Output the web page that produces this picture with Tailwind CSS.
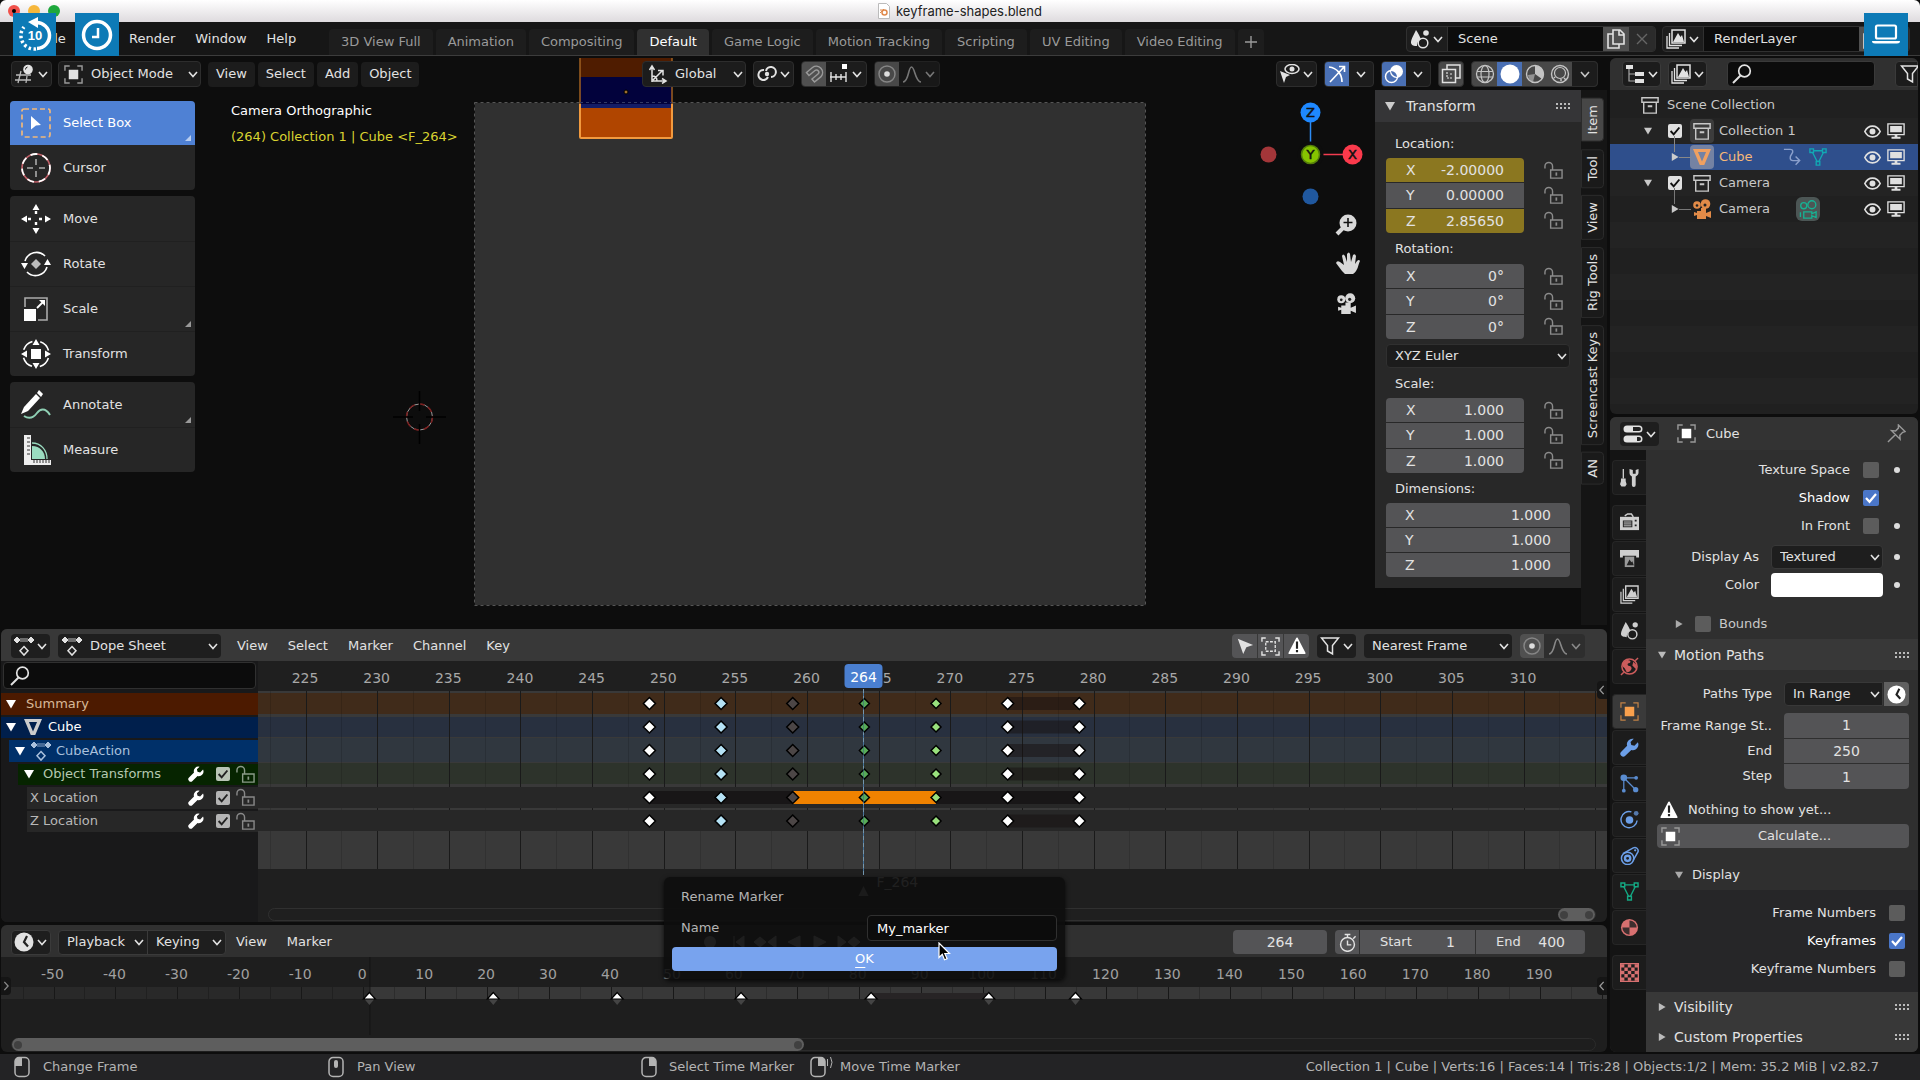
<!DOCTYPE html>
<html lang="en">
<head>
    <meta charset="UTF-8">
    <meta name="viewport" content="width=device-width, initial-scale=1.0">
    <title>keyframe-shapes.blend</title>
    <script src="https://cdn.jsdelivr.net/npm/@tailwindcss/browser@4"></script>
</head>
<body class="bg-black">
    <!-- Icon sprite -->
    <svg class="hidden">
        <symbol id="chev" viewBox="0 0 12 12"><path d="M2 4l4 4.500 4-4.500" fill="none" stroke="currentColor" stroke-width="1.600"/></symbol>
        <symbol id="chev-left" viewBox="0 0 12 12"><path d="M8 1L3.500 6 8 11" fill="none" stroke="currentColor" stroke-width="1.600"/></symbol>
        <symbol id="chev-right" viewBox="0 0 12 12"><path d="M4 1l4.500 5L4 11" fill="none" stroke="currentColor" stroke-width="1.600"/></symbol>
        <symbol id="tri-down" viewBox="0 0 10 10"><path d="M0 1h10L5 9.500z" fill="currentColor"/></symbol>
        <symbol id="tri-right" viewBox="0 0 10 10"><path d="M1 0v10l8.500-5z" fill="currentColor"/></symbol>
        <symbol id="grip" viewBox="0 0 16 8"><path d="M1 2h14M1 6h14" stroke="currentColor" stroke-width="2" stroke-dasharray="2 2"/></symbol>
        <symbol id="check" viewBox="0 0 16 16"><path d="M3 8l3.500 3.800L13 4" fill="none" stroke="currentColor" stroke-width="2.200"/></symbol>
        <symbol id="view3d" viewBox="0 0 20 20"><path d="M6 7L3 19M12 12l-1 7M1 11h15M0 16h16" fill="none" stroke="currentColor" stroke-width="1.300" opacity=".8"/><circle cx="13" cy="5.500" r="4.800" fill="currentColor"/><path d="M10.500 5.500a2.500 2.500 0 0 1 2-2.500" fill="none" stroke="#222"/></symbol>
        <symbol id="objmode" viewBox="0 0 20 20"><path d="M1 6V1h5M14 1h5v5M19 14v5h-5M6 19H1v-5" fill="none" stroke="#999" stroke-width="1.500"/><path d="M5 5h10v10H5z" fill="currentColor"/></symbol>
        <symbol id="axes" viewBox="0 0 20 20"><path d="M4 18V3M4 17h14M5 16L14 7M1.500 6L4 2l2.500 4M14 14.500l4 2.500-4 2.500M10 6.500h5v5M4 12c3 0 5 2 5 5" fill="none" stroke="currentColor" stroke-width="1.500"/></symbol>
        <symbol id="pivot" viewBox="0 0 20 20"><path d="M9 7a5 5 0 1 1 5 6M11 13a5 5 0 1 1-4-7" fill="none" stroke="currentColor" stroke-width="2"/><circle cx="10" cy="10" r="2.200" fill="currentColor"/></symbol>
        <symbol id="magnet" viewBox="0 0 20 20"><path d="M2.500 8.500L8.500 3.500a6.300 6.300 0 0 1 8.500 9.200L10.500 18l-2.500-3 6-5a2.300 2.300 0 0 0-3-3.500L5 11.500z" fill="none" stroke="currentColor" stroke-width="1.500"/><path d="M8 15l2.500 3" stroke="currentColor"/></symbol>
        <symbol id="snapinc" viewBox="0 0 20 20"><path d="M1 13h16M2 8v10M7 10v6M12 10v6M17 8v10" stroke="currentColor" stroke-width="1.400"/><path d="M13 0h5v5h-5z" fill="#fff"/></symbol>
        <symbol id="prop" viewBox="0 0 20 20"><circle cx="10" cy="10" r="8" fill="none" stroke="#858585" stroke-width="1.500"/><circle cx="10" cy="10" r="2.800" fill="#ddd"/></symbol>
        <symbol id="curve" viewBox="0 0 20 20"><path d="M1 18c6 0 5-15 8.500-15S13 18 19 18" fill="none" stroke="currentColor" stroke-width="1.600"/></symbol>
        <symbol id="viseye" viewBox="0 0 20 20"><path d="M0 7l10 4-4 2-2 6z" fill="currentColor"/><ellipse cx="12" cy="5" rx="7" ry="4.500" fill="none" stroke="currentColor" stroke-width="1.500"/><circle cx="12" cy="5" r="2.500" fill="currentColor"/></symbol>
        <symbol id="gizmo" viewBox="0 0 20 20"><path d="M2 3c8 1 13 7 13 15M3 18L17 3M12 2.500h5.500V8" fill="none" stroke="currentColor" stroke-width="1.600"/></symbol>
        <symbol id="overlay" viewBox="0 0 20 20"><circle cx="12.500" cy="7.500" r="6.500" fill="currentColor"/><circle cx="7.500" cy="12.500" r="6" fill="none" stroke="currentColor" stroke-width="1.500"/><path d="M7 7a6 6 0 0 1 6 6 6.500 6.500 0 0 1-6-6z" fill="#4a70b4"/></symbol>
        <symbol id="xray" viewBox="0 0 20 20"><path d="M6 5V1h13v13h-4" fill="none" stroke="currentColor" stroke-width="1.500"/><path d="M1.500 5.500h13v13h-13z" fill="none" stroke="currentColor" stroke-width="1.500"/><path d="M6 8v6h6M9 10h3" fill="none" stroke="currentColor" stroke-width="1.200" stroke-dasharray="2 1"/></symbol>
        <symbol id="wire" viewBox="0 0 20 20"><circle cx="10" cy="10" r="8.500" fill="none" stroke="currentColor" stroke-width="1.300"/><ellipse cx="10" cy="10" rx="4" ry="8.500" fill="none" stroke="currentColor" stroke-width="1.200"/><path d="M2 7.500h16M2 13h16" stroke="currentColor" stroke-width="1.200"/></symbol>
        <symbol id="matsh" viewBox="0 0 20 20"><circle cx="10" cy="10" r="8.500" fill="none" stroke="currentColor" stroke-width="1.400"/><path d="M10 2v8l7 5a8 8 0 0 0-7-13z" fill="currentColor"/><path d="M3 11l7-1-2 8a8 8 0 0 1-5-7z" fill="currentColor" opacity=".6"/></symbol>
        <symbol id="rendsh" viewBox="0 0 20 20"><circle cx="10" cy="10" r="8.500" fill="none" stroke="currentColor" stroke-width="1.400"/><circle cx="10" cy="9" r="5.500" fill="none" stroke="currentColor" stroke-width="1.200"/><path d="M14 14l2 2M11 15v2M5 13l-1 1" stroke="currentColor" stroke-width="1.500"/></symbol>
        <symbol id="scene" viewBox="0 0 20 20"><path d="M6 1C3 7 1 11 1 13.500c0 3 3.500 3.500 6 3.500 0-4 2-6 4-6.500C10 7.500 8 4 6 1z" fill="currentColor"/><circle cx="13" cy="14" r="4.800" fill="none" stroke="currentColor" stroke-width="1.500"/><circle cx="16" cy="4" r="2.800" fill="currentColor"/></symbol>
        <symbol id="layers" viewBox="0 0 20 20"><path d="M6 1h13v13H6z" fill="none" stroke="currentColor" stroke-width="1.500"/><path d="M7 13l5-9 2.500 4L16 6l2 7z" fill="currentColor"/><path d="M3.500 4v12.500H16M1 7v12h12" fill="none" stroke="currentColor" stroke-width="1.300"/></symbol>
        <symbol id="copy" viewBox="0 0 20 20"><path d="M7 1h7l4 4v10H7zM13 1v5h5" fill="none" stroke="currentColor" stroke-width="1.600"/><path d="M7 5H2v14h11v-4" fill="none" stroke="currentColor" stroke-width="1.600"/></symbol>
        <symbol id="cross" viewBox="0 0 20 20"><path d="M5 5l10 10M15 5L5 15" stroke="currentColor" stroke-width="1.400"/></symbol>
        <symbol id="outliner" viewBox="0 0 20 20"><path d="M1 1h7v4H1zM10 8h9v4h-9zM10 15h9v4h-9z" fill="currentColor"/><path d="M4 5v12h6M4 10h6" fill="none" stroke="currentColor" stroke-width="1.200" opacity=".7"/></symbol>
        <symbol id="search" viewBox="0 0 20 20"><circle cx="12.500" cy="7" r="5.800" fill="none" stroke="currentColor" stroke-width="1.700"/><path d="M8.500 11.500L1 19" stroke="currentColor" stroke-width="2"/></symbol>
        <symbol id="funnel" viewBox="0 0 20 20"><path d="M1.500 2h17l-6 7.500V18l-5-3V9.500z" fill="none" stroke="currentColor" stroke-width="1.500"/></symbol>
        <symbol id="coll" viewBox="0 0 20 20"><path d="M1 2h18v5H1zM3 7v12h14V7" fill="none" stroke="currentColor" stroke-width="1.600"/><path d="M7.500 11.500h5" stroke="currentColor" stroke-width="2.200"/></symbol>
        <symbol id="meshobj" viewBox="0 0 20 20"><path d="M0 1h20l-7.500 18h-5zM5.500 4.500L10 15l4.500-10.500z" fill="currentColor" fill-rule="evenodd"/></symbol>
        <symbol id="mesh" viewBox="0 0 20 20"><path d="M5 3h10M4 5l5 10M16 5l-5 10" stroke="currentColor" stroke-width="1.500"/><path d="M1 1h4v4H1zM15 1h4v4h-4zM8 15h4v4H8z" fill="none" stroke="currentColor" stroke-width="1.500"/></symbol>
        <symbol id="animlink" viewBox="0 0 20 20"><path d="M1 1.500h7c3.500 0 3.500 3 1.500 5.500s-2.500 7 1.500 7h7.500M14 9.500l4.500 4.500-4.500 4.500" fill="none" stroke="currentColor" stroke-width="1.600"/></symbol>
        <symbol id="cam" viewBox="0 0 20 20"><circle cx="5" cy="6" r="3.800" fill="currentColor"/><circle cx="13.500" cy="5" r="4.800" fill="currentColor"/><circle cx="5" cy="6.500" r="1.300" fill="#222"/><circle cx="13" cy="6" r="1.500" fill="#222"/><path d="M5 12h9v2l5-2v7l-5-2v3H5v-4l-3 1v-4l3 1zM9 9h5v3H9z" fill="currentColor"/></symbol>
        <symbol id="camdata" viewBox="0 0 20 20"><circle cx="5" cy="6" r="3.200" fill="none" stroke="currentColor" stroke-width="1.400"/><circle cx="13.500" cy="5" r="4.200" fill="none" stroke="currentColor" stroke-width="1.400"/><path d="M5 12.500h8.500v2l4.500-2v6l-4.500-2v2.500H5zM1.500 13v5" fill="none" stroke="currentColor" stroke-width="1.400"/></symbol>
        <symbol id="eye" viewBox="0 0 20 20"><path d="M1 10c4-8.500 14-8.500 18 0-4 8.500-14 8.500-18 0z" fill="none" stroke="currentColor" stroke-width="2"/><circle cx="10" cy="10" r="3.500" fill="currentColor"/></symbol>
        <symbol id="screen" viewBox="0 0 20 20"><path d="M1 2h18v12H1z" fill="none" stroke="currentColor" stroke-width="1.500"/><path d="M3.500 4.500h13v7h-13zM8.500 14h3v2.500h-3zM5 16.500h10v2H5z" fill="currentColor"/></symbol>
        <symbol id="lock" viewBox="0 0 20 20"><path d="M1 8V5.500a4 4 0 0 1 8 0V9M7 9.500h12V18H7z" fill="none" stroke="currentColor" stroke-width="1.500"/><path d="M13 12v3.500" stroke="currentColor" stroke-width="1.800"/></symbol>
        <symbol id="wrench" viewBox="0 0 20 20"><path d="M18.800 4.500l-3.600 3.600-3.300-.8-.8-3.200L14.500.9a5.800 5.800 0 0 0-7 7.300L1.300 14.400a3 3 0 1 0 4.300 4.300l6.300-6.200a5.800 5.800 0 0 0 6.900-8z" fill="currentColor"/></symbol>
        <symbol id="dope" viewBox="0 0 20 20"><path d="M0 4l3-3 3 3-3 3zM14 4l3-3 3 3-3 3z" fill="currentColor" stroke="currentColor"/><path d="M6 2h8v4H6z" fill="currentColor" opacity=".4"/><path d="M10 10.500l4 4.300-4 4.300-4-4.300z" fill="none" stroke="currentColor" stroke-width="1.500"/></symbol>
        <symbol id="clock" viewBox="0 0 20 20"><circle cx="10" cy="10" r="9.500" fill="currentColor"/><path d="M13 4l-3 6 4 4.500" fill="none" stroke="#222" stroke-width="2.200"/></symbol>
        <symbol id="stopwatch" viewBox="0 0 20 20"><circle cx="10" cy="12" r="7.300" fill="none" stroke="currentColor" stroke-width="1.500"/><path d="M7 1.500h6M10 2v3M16 6l2.500-2.500M10 8v4.500h4" fill="none" stroke="currentColor" stroke-width="1.500"/></symbol>
        <symbol id="arrow" viewBox="0 0 20 20"><path d="M2 2l17 7-7.500 2.500L8 19z" fill="currentColor"/></symbol>
        <symbol id="dashbox" viewBox="0 0 20 20"><path d="M1 5V1h4M15 1h4v4M19 15v4h-4M5 19H1v-4" fill="none" stroke="currentColor" stroke-width="1.500"/><path d="M5 5h10v10H5z" fill="none" stroke="currentColor" stroke-width="1.400" stroke-dasharray="3 1.500"/></symbol>
        <symbol id="warn" viewBox="0 0 20 20"><path d="M10 1.500L18.500 18h-17z" fill="currentColor" stroke="currentColor" stroke-width="2" stroke-linejoin="round"/><path d="M10 5v8M10 14.500v2.500" stroke="#222" stroke-width="2.400"/></symbol>
        <symbol id="props" viewBox="0 0 20 20"><path d="M4 1.500h12a3.500 3.500 0 0 1 0 7H4a3.500 3.500 0 0 1 0-7zM4 11.500h12a3.500 3.500 0 0 1 0 7H4a3.500 3.500 0 0 1 0-7z" fill="currentColor"/><path d="M10 3h6a2 2 0 0 1 0 4h-6zM14 13h2a2 2 0 0 1 0 4h-2z" fill="#222"/></symbol>
        <symbol id="pin" viewBox="0 0 20 20"><path d="M12 1l7 7-2.500.8-3 3 .3 4.200-9-9 4.200.3 3-3zM9 11l-8 8" fill="none" stroke="currentColor" stroke-width="1.500"/></symbol>
        <symbol id="tools" viewBox="0 0 20 20"><path d="M3.500 1v10" stroke="currentColor" stroke-width="1.400"/><path d="M1 11h5v3l1 3-1.500 2.500h-4L0 17l1-3z" fill="currentColor"/><path d="M10 1v4c0 2 1 3 2.500 4v9a1.800 1.800 0 0 0 4 0V9C18 8 19.500 7 19.500 5V1l-3 1v4h-3V2z" fill="currentColor"/></symbol>
        <symbol id="render" viewBox="0 0 20 20"><path d="M5 3l3-2h4l2 3" fill="none" stroke="currentColor" stroke-width="1.600"/><path d="M0 4h20v14H0z" fill="currentColor"/><path d="M3 8h10v7H3zM15.500 7h2v2h-2zM15.500 12h2v2h-2z" fill="#222"/><path d="M4 9.500h8M4 11.500h8M4 13.500h8" stroke="currentColor"/></symbol>
        <symbol id="output" viewBox="0 0 20 20"><path d="M0 1h20v8h-3V7H3v2H0z" fill="currentColor"/><path d="M5 8h10v11H5z" fill="currentColor" opacity=".7"/><path d="M7 17l3-6 2 3 1-1 1.500 4z" fill="#222"/></symbol>
        <symbol id="world" viewBox="0 0 20 20"><circle cx="10" cy="10" r="8" fill="none" stroke="currentColor" stroke-width="1.600"/><path d="M4 5c3-3 7-2 7 0s-3 1-3 3 3 1 4 3-2 5-4 5-2-4-4-5-2-4 0-6zM14 5l4 4-1 4-4-4z" fill="currentColor"/><path d="M16 4l3-3M1 19l3-3" stroke="currentColor" stroke-width="1.500"/></symbol>
        <symbol id="object" viewBox="0 0 20 20"><path d="M1 6V1h5M14 1h5v5M19 14v5h-5M6 19H1v-5" fill="none" stroke="currentColor" stroke-width="1.300" opacity=".7"/><path d="M5 5h10v10H5z" fill="currentColor"/></symbol>
        <symbol id="particles" viewBox="0 0 20 20"><path d="M4 4h12M4 4v13M4 4l12 12" stroke="currentColor" stroke-width="1.300"/><circle cx="4" cy="4" r="3.500" fill="currentColor"/><circle cx="17" cy="4" r="2" fill="currentColor"/><circle cx="4" cy="17.500" r="2" fill="currentColor"/><circle cx="16.500" cy="16.500" r="2.800" fill="currentColor"/></symbol>
        <symbol id="physics" viewBox="0 0 20 20"><path d="M12 2a8.500 8.500 0 1 0 6 9" fill="none" stroke="currentColor" stroke-width="1.500"/><circle cx="10" cy="10.500" r="4" fill="currentColor"/><circle cx="17" cy="3.500" r="2.500" fill="currentColor" opacity=".7"/></symbol>
        <symbol id="constraint" viewBox="0 0 20 20"><path d="M3 8L14 2a3.500 3.500 0 0 1 5 4l-5 9" fill="none" stroke="currentColor" stroke-width="1.600"/><circle cx="8" cy="13" r="6.500" fill="none" stroke="currentColor" stroke-width="1.600"/><circle cx="8" cy="13" r="2.800" fill="none" stroke="currentColor" stroke-width="2.500"/><circle cx="16" cy="4.500" r="1.200" fill="currentColor"/></symbol>
        <symbol id="material" viewBox="0 0 20 20"><circle cx="10" cy="10" r="9" fill="currentColor"/><path d="M10 10V2.500A7.500 7.500 0 0 1 17.500 10zM10 10v7.500A7.500 7.500 0 0 1 2.500 10z" fill="#222" opacity=".85"/></symbol>
        <symbol id="texture" viewBox="0 0 20 20"><path d="M.7.700h18.600v18.600H.7z" fill="none" stroke="currentColor" stroke-width="1.400"/><path d="M1 3h18M1 10h18M1 17h18" stroke="currentColor" stroke-width="3.600" stroke-dasharray="3.600"/><path d="M4.600 6.600h14.400M4.600 13.500h14.400" stroke="currentColor" stroke-width="3.600" stroke-dasharray="3.600"/></symbol>
        <symbol id="mouse-l" viewBox="0 0 20 22"><path d="M5 1.500h6a4 4 0 0 1 4 4v11a4 4 0 0 1-4 4H5a4 4 0 0 1-4-4v-11a4 4 0 0 1 4-4z" fill="none" stroke="currentColor" stroke-width="1.500"/><path d="M8 2v8H1V5.500C1 3 3 1.500 5 1.500z" fill="currentColor"/></symbol>
        <symbol id="mouse-m" viewBox="0 0 20 22"><path d="M5 1.500h6a4 4 0 0 1 4 4v11a4 4 0 0 1-4 4H5a4 4 0 0 1-4-4v-11a4 4 0 0 1 4-4z" fill="none" stroke="currentColor" stroke-width="1.500"/><rect x="6" y="4" width="4" height="8" rx="2" fill="currentColor"/></symbol>
        <symbol id="mouse-r" viewBox="0 0 20 22"><path d="M5 1.500h6a4 4 0 0 1 4 4v11a4 4 0 0 1-4 4H5a4 4 0 0 1-4-4v-11a4 4 0 0 1 4-4z" fill="none" stroke="currentColor" stroke-width="1.500"/><path d="M8 2v8h7V5.500c0-2.500-2-4-4-4z" fill="currentColor"/></symbol>
    </svg>

    <div class="relative flex h-screen flex-col overflow-hidden bg-[#0d0d0d] font-['DejaVu_Sans',sans-serif] text-[13px] leading-4 text-[#e2e2e2]">
        <!-- Window title -->
        <header class="relative flex h-[22px] shrink-0 items-center justify-center gap-1.5 rounded-t-md bg-linear-to-b from-white to-[#dedbde] text-[#222]">
            <div class="absolute left-2 flex gap-2">
                <span class="flex size-3 items-center justify-center rounded-full bg-[#f0514b]"><i class="size-1 rounded-full bg-black"></i></span>
                <span class="size-3 rounded-full bg-[#f6b73c]"></span>
                <span class="size-3 rounded-full bg-[#1fa83c]"></span>
            </div>
            <svg class="h-4 w-3" viewBox="0 0 12 16"><path d="M.5.500h8l3 3v12H.5z" fill="#fff" stroke="#bbb"/><circle cx="6.500" cy="9.500" r="2.500" fill="none" stroke="#e08a4c" stroke-width="1.500"/><path d="M2 10l4-4M2 7h4" stroke="#e08a4c"/></svg>
            <h1 class="font-[Inter,sans-serif] text-[13px]">keyframe-shapes.blend</h1>
        </header>

        <!-- Top bar -->
        <div class="flex h-[34px] shrink-0 items-stretch border-b border-[#3c3c3c] bg-[#161616]">
            <nav class="flex w-[329px] shrink-0 items-center gap-5 pl-[44px]">
                <button class="w-[65px] text-left">File</button>
                <button>Render</button>
                <button>Window</button>
                <button>Help</button>
            </nav>
            <nav class="flex items-stretch gap-[3px] pt-[7px] text-[#9a9a9a] *:rounded-t *:bg-[#1d1d1d] *:px-3">
                <button>3D View Full</button>
                <button>Animation</button>
                <button>Compositing</button>
                <button class="bg-[#303030]! text-white">Default</button>
                <button>Game Logic</button>
                <button>Motion Tracking</button>
                <button>Scripting</button>
                <button>UV Editing</button>
                <button>Video Editing</button>
                <button class="px-1.5!" aria-label="Add workspace"><svg class="size-3.5" viewBox="0 0 14 14"><path d="M7 1v12M1 7h12" stroke="currentColor" stroke-width="1.400"/></svg></button>
            </nav>
            <div class="ml-auto flex items-center gap-1.5 pr-2.5">
                <div class="flex h-[26px] overflow-hidden rounded border border-[#303030] bg-[#1d1d1d]">
                    <button class="flex w-10 items-center justify-center gap-0.5" aria-label="Browse scene"><svg class="size-5"><use href="#scene"/></svg><svg class="size-3"><use href="#chev"/></svg></button>
                    <input aria-label="Scene name" class="w-[156px] border-l border-[#303030] bg-[#0c0c0c] pl-2.5" value="Scene">
                    <button class="flex w-[26px] items-center justify-center bg-[#505050]" aria-label="New scene"><svg class="size-5"><use href="#copy"/></svg></button>
                    <button class="flex w-[26px] items-center justify-center bg-[#2b2b2b] text-[#666]" aria-label="Remove scene"><svg class="size-5"><use href="#cross"/></svg></button>
                </div>
                <div class="flex h-[26px] overflow-hidden rounded border border-[#303030] bg-[#1d1d1d]">
                    <button class="flex w-10 items-center justify-center gap-0.5" aria-label="Browse layer"><svg class="size-5"><use href="#layers"/></svg><svg class="size-3"><use href="#chev"/></svg></button>
                    <input aria-label="Layer name" class="w-[156px] border-l border-[#303030] bg-[#0c0c0c] pl-2.5" value="RenderLayer">
                    <button class="flex w-[26px] items-center justify-center bg-[#505050]" aria-label="New layer"><svg class="size-5"><use href="#copy"/></svg></button>
                    <button class="flex w-[24px] items-center justify-center bg-[#2b2b2b] text-[#666]" aria-label="Remove layer"><svg class="size-5"><use href="#cross"/></svg></button>
                </div>
            </div>
        </div>

        <main class="flex min-h-0 flex-1 gap-[3px] pt-0.5">
            <div class="flex min-w-0 flex-1 flex-col">

                <!-- 3D viewport -->
                <section class="relative flex min-h-0 flex-1 flex-col overflow-hidden">
                    <svg class="absolute inset-0 size-full">
                        <rect x="474.500" y="44.500" width="671" height="503" fill="#303030" stroke="#111"/>
                        <rect x="474.500" y="44.500" width="671" height="503" fill="none" stroke="#555" stroke-dasharray="3 3"/>
                        <rect x="580" y="-4" width="92" height="23" fill="#4f1c00"/>
                        <rect x="580" y="19" width="92" height="27" fill="#02023c"/>
                        <rect x="580" y="46" width="92" height="4" fill="#141c66"/>
                        <rect x="580" y="50" width="92" height="30" fill="#b04500"/>
                        <path d="M580 -2v48M672 -2v48" stroke="#a06020" stroke-width="1.500"/>
                        <path d="M580 44.500h92" stroke="#333a66" stroke-dasharray="3 3"/>
                        <path d="M580 46v33q0 1 1 1h90q1 0 1-1V46" fill="none" stroke="#f29a3e" stroke-width="2"/>
                        <circle cx="626" cy="34" r="2" fill="#a07030" stroke="#000"/>
                        <circle cx="419.500" cy="359" r="13" fill="none" stroke="#999"/>
                        <circle cx="419.500" cy="359" r="13" fill="none" stroke="#7c1f1f" stroke-width="1.500" stroke-dasharray="6 4"/>
                        <path d="M393 359h20M426 359h20M419.500 333v20M419.500 366v20" stroke="#000" stroke-width="1.500"/>
                    </svg>

                    <div class="relative flex h-8 shrink-0 items-center justify-between">
                        <div class="flex w-[642px] items-center pl-[11px]">
                            <button class="mr-1.5 flex h-[26px] w-[41px] items-center justify-center gap-0.5 rounded border border-[#2d2d2d] bg-[#1c1c1c]" aria-label="Editor type"><svg class="size-5"><use href="#view3d"/></svg><svg class="size-3"><use href="#chev"/></svg></button>
                            <div class="relative mr-[7px] flex items-center">
                                <svg class="pointer-events-none absolute left-1.5 size-[19px]"><use href="#objmode"/></svg>
                                <select aria-label="Mode" class="h-[26px] w-[143px] appearance-none rounded border border-[#2d2d2d] bg-[#1c1c1c] pl-8"><option>Object Mode</option></select>
                                <svg class="pointer-events-none absolute right-0.5 size-3"><use href="#chev"/></svg>
                            </div>
                            <nav class="flex gap-[3px] *:h-[25px] *:rounded *:bg-[#1c1c1c] *:px-2">
                                <button>View</button><button>Select</button><button>Add</button><button>Object</button>
                            </nav>
                        </div>
                        <div class="flex flex-1 items-center gap-[7px]">
                            <div class="relative flex items-center">
                                <svg class="pointer-events-none absolute left-1.5 size-5"><use href="#axes"/></svg>
                                <select aria-label="Orientation" class="h-[26px] w-[104px] appearance-none rounded border border-[#2d2d2d] bg-[#1c1c1c] pl-8"><option>Global</option></select>
                                <svg class="pointer-events-none absolute right-0.5 size-3"><use href="#chev"/></svg>
                            </div>
                            <button class="flex h-[26px] w-[41px] items-center justify-center gap-0.5 rounded border border-[#2d2d2d] bg-[#1c1c1c]" aria-label="Pivot point"><svg class="size-5"><use href="#pivot"/></svg><svg class="size-3"><use href="#chev"/></svg></button>
                            <div class="flex h-[26px] overflow-hidden rounded border border-[#2d2d2d] bg-[#1c1c1c]">
                                <button class="flex w-6 items-center justify-center bg-[#505050] text-[#999]" aria-label="Snap"><svg class="size-5"><use href="#magnet"/></svg></button>
                                <button class="flex w-10 items-center justify-center gap-0.5" aria-label="Snapping"><svg class="size-5"><use href="#snapinc"/></svg><svg class="size-3"><use href="#chev"/></svg></button>
                            </div>
                            <div class="flex h-[26px] overflow-hidden rounded border border-[#222] bg-[#181818]">
                                <button class="flex w-6 items-center justify-center bg-[#484848]" aria-label="Proportional editing"><svg class="size-5"><use href="#prop"/></svg></button>
                                <button class="flex w-10 items-center justify-center gap-0.5 text-[#777]" aria-label="Falloff"><svg class="size-5"><use href="#curve"/></svg><svg class="size-3"><use href="#chev"/></svg></button>
                            </div>
                        </div>
                        <div class="flex items-center gap-[7px] pr-[9px]">
                            <button class="flex h-[26px] w-[41px] items-center justify-center gap-0.5 rounded border border-[#2d2d2d] bg-[#1c1c1c]" aria-label="Object visibility"><svg class="size-5"><use href="#viseye"/></svg><svg class="size-3"><use href="#chev"/></svg></button>
                            <div class="flex h-[26px] overflow-hidden rounded border border-[#2d2d2d] bg-[#1c1c1c]">
                                <button class="flex w-6 items-center justify-center bg-[#4a70b4] text-white" aria-label="Gizmos"><svg class="size-5"><use href="#gizmo"/></svg></button>
                                <button class="flex w-6 items-center justify-center" aria-label="Gizmo options"><svg class="size-3"><use href="#chev"/></svg></button>
                            </div>
                            <div class="flex h-[26px] overflow-hidden rounded border border-[#2d2d2d] bg-[#1c1c1c]">
                                <button class="flex w-6 items-center justify-center bg-[#4a70b4] text-white" aria-label="Overlays"><svg class="size-5"><use href="#overlay"/></svg></button>
                                <button class="flex w-6 items-center justify-center" aria-label="Overlay options"><svg class="size-3"><use href="#chev"/></svg></button>
                            </div>
                            <button class="flex h-[26px] w-[26px] items-center justify-center rounded border border-[#2d2d2d] bg-[#484848]" aria-label="X-ray"><svg class="size-5"><use href="#xray"/></svg></button>
                            <div class="flex h-[26px] overflow-hidden rounded border border-[#2d2d2d] bg-[#484848] text-[#c4c4c4] *:flex *:w-[25px] *:items-center *:justify-center">
                                <button aria-label="Wireframe"><svg class="size-5"><use href="#wire"/></svg></button>
                                <button aria-label="Solid" class="bg-[#4a70b4]"><svg class="size-5" viewBox="0 0 20 20"><circle cx="10" cy="10" r="9.500" fill="#fff"/></svg></button>
                                <button aria-label="Material preview"><svg class="size-5"><use href="#matsh"/></svg></button>
                                <button aria-label="Rendered"><svg class="size-5"><use href="#rendsh"/></svg></button>
                                <button aria-label="Shading options" class="bg-[#1c1c1c]"><svg class="size-3"><use href="#chev"/></svg></button>
                            </div>
                        </div>
                    </div>

                    <div class="relative flex min-h-0 flex-1 items-start">
                        <!-- Toolbar -->
                        <div class="mt-[11px] ml-2.5 flex w-[185px] flex-col gap-1.5 *:flex *:flex-col *:overflow-hidden *:rounded *:bg-[#262626]">
                            <div>
                                <button class="relative flex h-11 items-center gap-3 bg-[#4f81d4] pl-[11px] text-white">
                                    <svg class="size-[30px]" viewBox="0 0 30 30"><rect x="1" y="1" width="28" height="28" rx="2" fill="none" stroke="#f0b87a" stroke-width="1.700" stroke-dasharray="5 3"/><path d="M10 8l10 9-5 .5-5 4z" fill="#fff"/></svg>Select Box
                                    <svg class="absolute right-1 bottom-1 size-1.5" viewBox="0 0 6 6"><path d="M6 0v6H0z" fill="#b8cdf0"/></svg>
                                </button>
                                <button class="flex h-[45px] items-center gap-3 pl-[11px]">
                                    <svg class="size-[30px]" viewBox="0 0 30 30"><circle cx="15" cy="15" r="14" fill="none" stroke="#c06068" stroke-width="1.600"/><circle cx="15" cy="15" r="14" fill="none" stroke="#fff" stroke-width="1.800" stroke-dasharray="7 5"/><path d="M15 6v6M15 18v6M6 15h6M18 15h6" stroke="#aaa" stroke-width="1.600"/></svg>Cursor
                                </button>
                            </div>
                            <div>
                                <button class="flex h-[45px] items-center gap-3 pl-[11px]">
                                    <svg class="size-[30px]" viewBox="0 0 30 30"><path d="M15 0l3.500 6h-7zM15 30l3.500-6h-7zM0 15l6-3.500v7zM30 15l-6-3.500v7z" fill="#fff"/><path d="M15 7v5M15 18v5M7 15h5M18 15h5" stroke="#fff" stroke-width="2.400" stroke-dasharray="3 2"/></svg>Move
                                </button>
                                <button class="flex h-[45px] items-center gap-3 border-t border-[#202020] pl-[11px]">
                                    <svg class="size-[30px]" viewBox="0 0 30 30"><path d="M4 12A12 12 0 0 1 24 7M26 18A12 12 0 0 1 6 23" fill="none" stroke="#fff" stroke-width="1.600"/><path d="M0 14h7l-3.500 6zM30 16h-7l3.500-6z" fill="#fff"/><path d="M15 10l5 5-5 5-5-5z" fill="#bbb"/></svg>Rotate
                                </button>
                                <button class="relative flex h-[45px] items-center gap-3 border-t border-[#202020] pl-[11px]">
                                    <svg class="size-[30px]" viewBox="0 0 30 30"><path d="M4 13V4h22v22h-9" fill="none" stroke="#aaa" stroke-width="1.600"/><path d="M3 15h12v12H3z" fill="#fff"/><path d="M16 14l6-6" stroke="#fff" stroke-width="1.800"/><path d="M24 6v6l-6-6z" fill="#fff"/></svg>Scale
                                    <svg class="absolute right-1 bottom-1 size-1.5" viewBox="0 0 6 6"><path d="M6 0v6H0z" fill="#999"/></svg>
                                </button>
                                <button class="flex h-[45px] items-center gap-3 border-t border-[#202020] pl-[11px]">
                                    <svg class="size-[30px]" viewBox="0 0 30 30"><circle cx="15" cy="15" r="13" fill="none" stroke="#fff" stroke-width="1.600" stroke-dasharray="12.400 8" stroke-dashoffset="-4"/><path d="M15 0l3.500 6h-7zM15 30l3.500-6h-7zM0 15l6-3.500v7zM30 15l-6-3.500v7zM10 10h10v10H10z" fill="#fff"/></svg>Transform
                                </button>
                            </div>
                            <div>
                                <button class="relative flex h-[45px] items-center gap-3 pl-[11px]">
                                    <svg class="size-[30px]" viewBox="0 0 30 30"><path d="M3 26c6 4 10 1 13-3s8-6 13 2" fill="none" stroke="#8fd0b4" stroke-width="2"/><path d="M0 24l3-7 12-13 4 4L7 21z" fill="#fff"/><path d="M16 3l2-3 4 4-2 3z" fill="#fff"/></svg>Annotate
                                    <svg class="absolute right-1 bottom-1 size-1.5" viewBox="0 0 6 6"><path d="M6 0v6H0z" fill="#999"/></svg>
                                </button>
                                <button class="flex h-[45px] items-center gap-3 border-t border-[#202020] pl-[11px]">
                                    <svg class="size-[30px]" viewBox="0 0 30 30"><path d="M11 24V11c8 0 13 6 13 13z" fill="#9adcc0"/><path d="M11 8c9 0 15 7 15 16" fill="none" stroke="#9adcc0" stroke-width="1.300"/><path d="M3 0h7v30H3z" fill="#eee"/><path d="M6 3h3M6 7h3M6 11h3M6 15h3M6 19h3" stroke="#333"/><path d="M3 25h27v5H3z" fill="#eee"/><path d="M13 28v-3M16 28v-3M19 28v-3M22 28v-3M25 28v-3M28 28v-3" stroke="#333"/></svg>Measure
                                </button>
                            </div>
                        </div>
                        <div class="mt-2 ml-9 flex flex-col">
                            <p class="h-[26px] leading-[26px] text-white">Camera Orthographic</p>
                            <p class="h-[26px] leading-[26px] text-[#d9d331]">(264) Collection 1 | Cube &lt;F_264&gt;</p>
                        </div>

                        <!-- Navigation gizmo -->
                        <svg class="ml-auto h-[240px] w-[120px] shrink-0" viewBox="0 0 120 240">
                            <path d="M55.500 22v42" stroke="#2d8cf5" stroke-width="1.500"/><path d="M55 64.500h42" stroke="#f23c50" stroke-width="1.500"/>
                            <circle cx="55.500" cy="64.500" r="13" fill="#0d0d0d"/>
                            <circle cx="55.500" cy="22.500" r="10" fill="#1e88ff"/><circle cx="97.500" cy="64.500" r="10" fill="#fb3a4c"/>
                            <circle cx="55.500" cy="64.500" r="9" fill="#86c400" stroke="#56800a" stroke-width="1.500"/>
                            <circle cx="13.500" cy="64.500" r="8" fill="#a33639"/><circle cx="55.500" cy="106.500" r="8" fill="#20589f"/>
                            <g font-size="13" text-anchor="middle" fill="#111" stroke="#111" stroke-width=".5"><text x="55.500" y="27">Z</text><text x="55.500" y="69">Y</text><text x="97.500" y="69">X</text></g>
                            <circle cx="93" cy="133" r="8.500" fill="#d8d8d8"/><path d="M88 138l-6 6" stroke="#d8d8d8" stroke-width="4"/><path d="M88.500 132.500h9M93 128v9" stroke="#111" stroke-width="1.600"/>
                            <path d="M87 181l-6-8q1-3 4-1l4 3-2-9q1-3 3 0l2 6v-8q2-3 3 0l1 8 2-7q2-2 3 1l-1 8 2-3q2-2 3 0c-2 4-2 10-7 13h-8z" fill="#d8d8d8"/>
                            <svg x="81" y="203" width="21" height="21" color="#d8d8d8"><use href="#cam"/></svg>
                        </svg>

                        <!-- Sidebar -->
                        <aside class="w-[206px] shrink-0 bg-[#282828] pb-[11px]">
                            <h2 class="flex h-8 items-center bg-[#353537] px-2.5 text-sm"><svg class="mr-[11px] size-2.5 text-[#ccc]"><use href="#tri-down"/></svg>Transform<svg class="ml-auto h-2 w-4 text-[#bbb]"><use href="#grip"/></svg></h2>
                            <div class="px-[11px]">
                                <h3 class="mt-1.5 h-[30px] pl-[9px] leading-8">Location:</h3>
                                <div class="flex">
                                    <div class="grid h-[75px] w-[138px] grid-rows-3 gap-px overflow-hidden rounded text-sm *:flex *:items-center *:bg-[#545456] *:px-5">
                                        <label class="bg-[#8b7720]!">X<input class="ml-auto w-20 text-right" value="-2.00000"></label>
                                        <label>Y<input class="ml-auto w-20 text-right" value="0.00000"></label>
                                        <label class="bg-[#8b7720]!">Z<input class="ml-auto w-20 text-right" value="2.85650"></label>
                                    </div>
                                    <div class="ml-5 grid grid-rows-3 items-center text-[#8b8b8b]">
                                        <button aria-label="Lock"><svg class="size-[19px]"><use href="#lock"/></svg></button><button aria-label="Lock"><svg class="size-[19px]"><use href="#lock"/></svg></button><button aria-label="Lock"><svg class="size-[19px]"><use href="#lock"/></svg></button>
                                    </div>
                                </div>
                                <h3 class="h-[31px] pl-[9px] leading-8">Rotation:</h3>
                                <div class="flex">
                                    <div class="grid h-[75px] w-[138px] grid-rows-3 gap-px overflow-hidden rounded text-sm *:flex *:items-center *:bg-[#545456] *:px-5">
                                        <label>X<input class="ml-auto w-20 text-right" value="0°"></label>
                                        <label>Y<input class="ml-auto w-20 text-right" value="0°"></label>
                                        <label>Z<input class="ml-auto w-20 text-right" value="0°"></label>
                                    </div>
                                    <div class="ml-5 grid grid-rows-3 items-center text-[#8b8b8b]">
                                        <button aria-label="Lock"><svg class="size-[19px]"><use href="#lock"/></svg></button><button aria-label="Lock"><svg class="size-[19px]"><use href="#lock"/></svg></button><button aria-label="Lock"><svg class="size-[19px]"><use href="#lock"/></svg></button>
                                    </div>
                                </div>
                                <div class="relative mt-[5px] flex items-center">
                                    <select aria-label="Rotation mode" class="h-6 w-full appearance-none rounded border border-[#303030] bg-[#1c1c1c] pl-2"><option>XYZ Euler</option></select>
                                    <svg class="pointer-events-none absolute right-0.5 size-3"><use href="#chev"/></svg>
                                </div>
                                <h3 class="h-[30px] pl-[9px] leading-8">Scale:</h3>
                                <div class="flex">
                                    <div class="grid h-[75px] w-[138px] grid-rows-3 gap-px overflow-hidden rounded text-sm *:flex *:items-center *:bg-[#545456] *:px-5">
                                        <label>X<input class="ml-auto w-20 text-right" value="1.000"></label>
                                        <label>Y<input class="ml-auto w-20 text-right" value="1.000"></label>
                                        <label>Z<input class="ml-auto w-20 text-right" value="1.000"></label>
                                    </div>
                                    <div class="ml-5 grid grid-rows-3 items-center text-[#8b8b8b]">
                                        <button aria-label="Lock"><svg class="size-[19px]"><use href="#lock"/></svg></button><button aria-label="Lock"><svg class="size-[19px]"><use href="#lock"/></svg></button><button aria-label="Lock"><svg class="size-[19px]"><use href="#lock"/></svg></button>
                                    </div>
                                </div>
                                <h3 class="h-[30px] pl-[9px] leading-8">Dimensions:</h3>
                                <div class="grid h-[74px] grid-rows-3 gap-px overflow-hidden rounded text-sm *:flex *:items-center *:bg-[#545456] *:px-[19px]">
                                    <label>X<input class="ml-auto w-20 text-right" value="1.000"></label>
                                    <label>Y<input class="ml-auto w-20 text-right" value="1.000"></label>
                                    <label>Z<input class="ml-auto w-20 text-right" value="1.000"></label>
                                </div>
                            </div>
                        </aside>
                        <nav class="flex w-[26px] shrink-0 flex-col items-start gap-[7px] self-stretch bg-[#151515] pt-2 *:w-[23px] *:rotate-180 *:rounded-l *:border *:border-[#2b2b2b] *:bg-[#1a1a1a] *:px-1.5 *:[writing-mode:vertical-rl]">
                            <button class="bg-[#474747]!">Item</button>
                            <button>Tool</button>
                            <button>View</button>
                            <button>Rig Tools</button>
                            <button>Screencast Keys</button>
                            <button>AN</button>
                        </nav>
                    </div>
                </section>

                <!-- Dope sheet -->
                <section class="mt-1 ml-px flex h-[293px] shrink-0 flex-col overflow-hidden rounded-md bg-[#1f1f1f]">
                    <div class="flex h-8 shrink-0 items-center bg-[#383838] px-2.5 pt-0.5">
                        <button class="mr-2 flex h-6 w-[39px] items-center justify-center gap-0.5 rounded bg-[#1e1e1e]" aria-label="Editor type"><svg class="size-5"><use href="#dope"/></svg><svg class="size-3"><use href="#chev"/></svg></button>
                        <div class="relative mr-1.5 flex items-center">
                            <svg class="pointer-events-none absolute left-1 size-5"><use href="#dope"/></svg>
                            <select aria-label="Editing mode" class="h-6 w-[163px] appearance-none rounded bg-[#1e1e1e] pl-8"><option>Dope Sheet</option></select>
                            <svg class="pointer-events-none absolute right-0.5 size-3"><use href="#chev"/></svg>
                        </div>
                        <nav class="flex *:px-2.5"><button>View</button><button>Select</button><button>Marker</button><button>Channel</button><button>Key</button></nav>
                        <div class="ml-auto flex items-center gap-2 pr-3">
                            <div class="flex h-6 gap-px overflow-hidden rounded *:flex *:w-[25px] *:items-center *:justify-center *:bg-[#545456]">
                                <button aria-label="Only selected"><svg class="size-[18px]"><use href="#arrow"/></svg></button>
                                <button aria-label="Show hidden"><svg class="size-[19px]"><use href="#dashbox"/></svg></button>
                                <button aria-label="Only errors" class="text-white"><svg class="size-[18px]"><use href="#warn"/></svg></button>
                            </div>
                            <button class="flex h-6 w-[39px] items-center justify-center gap-0.5 rounded bg-[#1e1e1e]" aria-label="Filter"><svg class="size-5"><use href="#funnel"/></svg><svg class="size-3"><use href="#chev"/></svg></button>
                            <div class="relative flex items-center">
                                <select aria-label="Auto snap" class="h-6 w-[148px] appearance-none rounded bg-[#1e1e1e] pl-2"><option>Nearest Frame</option></select>
                                <svg class="pointer-events-none absolute right-0.5 size-3"><use href="#chev"/></svg>
                            </div>
                            <div class="flex h-6 overflow-hidden rounded bg-[#2e2e2e]">
                                <button class="flex w-6 items-center justify-center bg-[#505050]" aria-label="Proportional editing"><svg class="size-5"><use href="#prop"/></svg></button>
                                <button class="flex w-[41px] items-center justify-center gap-0.5 text-[#888]" aria-label="Falloff"><svg class="size-5"><use href="#curve"/></svg><svg class="size-3"><use href="#chev"/></svg></button>
                            </div>
                        </div>
                    </div>
                    <div class="flex min-h-0 flex-1">
                        <div class="w-[257px] shrink-0 bg-[#19191a]">
                            <label class="mx-0.5 mt-px flex h-[27px] items-center rounded border border-[#303030] bg-[#0c0c0c] px-1.5"><svg class="size-5"><use href="#search"/></svg><input aria-label="Filter channels" class="min-w-0 flex-1"></label>
                            <ul class="mt-1 grid h-[139px] grid-rows-6 gap-0.5 *:flex *:items-center">
                                <li class="bg-[#4c1a00] pl-[5px] text-[#d8b898]"><svg class="mr-2.5 size-2.5 text-white"><use href="#tri-down"/></svg>Summary</li>
                                <li class="bg-[#001f4c] pl-[5px] text-white"><svg class="mr-2 size-2.5"><use href="#tri-down"/></svg><svg class="mr-1.5 size-[18px] text-[#ccc]"><use href="#meshobj"/></svg>Cube</li>
                                <li class="ml-2 bg-[#003069] pl-1.5 text-[#a9c0dc]"><svg class="mr-1.5 size-2.5 text-white"><use href="#tri-down"/></svg><svg class="mr-[5px] size-5"><use href="#dope"/></svg>CubeAction</li>
                                <li class="ml-[17px] bg-[#062400] pl-1.5 text-[#b5c8b0]"><svg class="mr-[9px] size-2.5 text-white"><use href="#tri-down"/></svg>Object Transforms
                                    <svg class="mr-3 ml-auto size-4 text-white"><use href="#wrench"/></svg><span class="grid size-3.5 *:col-start-1 *:row-start-1"><input type="checkbox" checked aria-label="Object Transforms" class="size-3.5 appearance-none rounded-xs bg-[#b9c4b6]"><svg class="pointer-events-none size-3.5 text-[#222]"><use href="#check"/></svg></span><svg class="mr-[3px] ml-1.5 size-[19px] text-[#8a9a88]"><use href="#lock"/></svg></li>
                                <li class="ml-[26px] bg-[#272727] pl-[3px] text-[#b8b8b8]">X Location
                                    <svg class="mr-3 ml-auto size-4 text-white"><use href="#wrench"/></svg><span class="grid size-3.5 *:col-start-1 *:row-start-1"><input type="checkbox" checked aria-label="X Location" class="size-3.5 appearance-none rounded-xs bg-[#b4b4b4]"><svg class="pointer-events-none size-3.5 text-[#222]"><use href="#check"/></svg></span><svg class="mr-[3px] ml-1.5 size-[19px] text-[#888]"><use href="#lock"/></svg></li>
                                <li class="ml-[26px] bg-[#272727] pl-[3px] text-[#b8b8b8]">Z Location
                                    <svg class="mr-3 ml-auto size-4 text-white"><use href="#wrench"/></svg><span class="grid size-3.5 *:col-start-1 *:row-start-1"><input type="checkbox" checked aria-label="Z Location" class="size-3.5 appearance-none rounded-xs bg-[#b4b4b4]"><svg class="pointer-events-none size-3.5 text-[#222]"><use href="#check"/></svg></span><svg class="mr-[3px] ml-1.5 size-[19px] text-[#888]"><use href="#lock"/></svg></li>
                            </ul>
                        </div>
                        <div class="relative flex min-w-0 flex-1 flex-col">
                            <svg id="dopeTracks" class="min-h-0 w-full flex-1 text-sm"></svg>
                            <button class="absolute top-[20px] right-0 flex h-[18px] w-2.5 items-center justify-center rounded-l bg-[#151515] text-[#999]" aria-label="Show sidebar"><svg class="size-3"><use href="#chev-left"/></svg></button>
                            <div class="mr-[11px] mb-px ml-2.5 flex h-[13px] justify-end rounded-full border border-[#303030]"><div class="-my-px flex w-[37px] items-center justify-between rounded-full bg-[#5e5e5e] px-0.5"><i class="size-2 rounded-full bg-[#404040]"></i><i class="size-2 rounded-full bg-[#404040]"></i></div></div>
                        </div>
                    </div>
                </section>

                <!-- Timeline -->
                <section class="relative mt-[3px] mb-0.5 ml-px flex h-[127px] shrink-0 flex-col overflow-hidden rounded-md bg-[#1e1e1e]">
                    <div class="flex h-8 shrink-0 items-center bg-[#303030] px-2.5 pt-0.5">
                        <button class="mr-[7px] flex h-[25px] w-10 items-center justify-center gap-0.5 rounded border border-[#3a3a3a] bg-[#1e1e1e]" aria-label="Editor type"><svg class="size-5"><use href="#clock"/></svg><svg class="size-3"><use href="#chev"/></svg></button>
                        <div class="flex h-[25px] rounded border border-[#3a3a3a] bg-[#1e1e1e]">
                            <button class="flex w-[89px] items-center justify-between border-r border-[#3a3a3a] pr-0.5 pl-2">Playback<svg class="size-3"><use href="#chev"/></svg></button>
                            <button class="flex w-[77px] items-center justify-between pr-0.5 pl-2">Keying<svg class="size-3"><use href="#chev"/></svg></button>
                        </div>
                        <nav class="flex *:px-2.5"><button>View</button><button>Marker</button></nav>
                        <svg class="ml-[360px] h-3.5 w-[170px] text-[#bbb]" viewBox="0 0 170 14"><path d="M32 1v12M42 1v12l-8-6zM52 7l6-5 6 5-6 5zM74 1v12l-8-6zM98 1v12L86 7zM112 1v12l12-6zM136 1v12l8-6zM146 7l6-5 6 5-6 5z" fill="currentColor" stroke="currentColor"/><circle cx="8" cy="7" r="6" fill="currentColor"/></svg>
                        <div class="ml-auto flex items-center gap-2 pr-3 text-sm">
                            <input aria-label="Current frame" class="h-6 w-[94px] rounded bg-[#545456] text-center" value="264">
                            <div class="flex h-6 gap-px overflow-hidden rounded *:flex *:items-center *:bg-[#545456]">
                                <button class="w-6 justify-center" aria-label="Preview range"><svg class="size-[19px]"><use href="#stopwatch"/></svg></button>
                                <label class="w-[115px] px-5"><span class="text-[13px]">Start</span><input class="ml-auto w-9 text-right" value="1"></label>
                                <label class="w-[109px] px-5"><span class="text-[13px]">End</span><input class="ml-auto w-9 text-right" value="400"></label>
                            </div>
                        </div>
                    </div>
                    <svg id="timelineTracks" class="min-h-0 w-full flex-1 text-sm"></svg>
                    <button class="absolute top-[52px] left-0 flex h-[18px] w-2.5 items-center justify-center rounded-r bg-[#151515] text-[#888]" aria-label="Show channels"><svg class="size-3"><use href="#chev-right"/></svg></button>
                    <button class="absolute top-[52px] right-0 flex h-[18px] w-2.5 items-center justify-center rounded-l bg-[#151515] text-[#999]" aria-label="Show sidebar"><svg class="size-3"><use href="#chev-left"/></svg></button>
                    <div class="mr-[11px] mb-px ml-2.5 flex h-[13px] rounded-full border border-[#2c2c2c]"><div class="-my-px flex w-1/2 items-center justify-between rounded-full bg-[#5e5e5e] px-0.5"><i class="size-2 rounded-full bg-[#404040]"></i><i class="size-2 rounded-full bg-[#404040]"></i></div></div>
                </section>
            </div>

            <div class="mr-0.5 flex w-[308px] shrink-0 flex-col">
                <!-- Outliner -->
                <section class="flex h-[356px] shrink-0 flex-col overflow-hidden rounded-md bg-[#202020]">
                    <div class="flex h-8 shrink-0 items-center bg-[#303030] pl-3">
                        <button class="mr-[7px] flex h-[26px] w-[39px] items-center justify-center gap-0.5 rounded border border-[#3a3a3a] bg-[#1c1c1c]" aria-label="Editor type"><svg class="size-5"><use href="#outliner"/></svg><svg class="size-3"><use href="#chev"/></svg></button>
                        <button class="mr-5 flex h-[26px] w-[39px] items-center justify-center gap-0.5 rounded border border-[#3a3a3a] bg-[#1c1c1c]" aria-label="Display mode"><svg class="size-5"><use href="#layers"/></svg><svg class="size-3"><use href="#chev"/></svg></button>
                        <label class="flex h-[26px] w-[148px] items-center rounded border border-[#3a3a3a] bg-[#0c0c0c] px-1"><svg class="size-5"><use href="#search"/></svg><input aria-label="Search" class="min-w-0 flex-1"></label>
                        <button class="ml-auto flex h-[26px] w-[23px] items-center rounded-l border border-[#3a3a3a] bg-[#1c1c1c] pl-1" aria-label="Filter"><svg class="size-5 shrink-0"><use href="#funnel"/></svg></button>
                    </div>
                    <ul class="text-[#c8c8c8] *:relative *:flex *:h-[26px] *:items-center *:pr-[13px]">
                        <li class="mt-0.5 pl-[31px]"><svg class="mr-2 size-[18px]"><use href="#coll"/></svg>Scene Collection</li>
                        <li class="bg-[#232323] pl-[34px]"><svg class="mr-4 size-2"><use href="#tri-down"/></svg>
                            <span class="mr-2 grid size-3.5 *:col-start-1 *:row-start-1"><input type="checkbox" checked aria-label="Collection 1" class="size-3.5 appearance-none rounded-xs bg-[#e0e0e0]"><svg class="pointer-events-none size-3.5 text-[#111]"><use href="#check"/></svg></span>
                            <span class="mr-[5px] flex size-6 items-center justify-center rounded bg-[#3c3c3c]"><svg class="size-[18px]"><use href="#coll"/></svg></span>Collection 1
                            <svg class="mr-1.5 ml-auto size-[17px] text-[#e0e0e0]"><use href="#eye"/></svg><svg class="size-[18px] text-[#e0e0e0]"><use href="#screen"/></svg></li>
                        <li class="bg-[#2f4f8c] pl-[61px] text-[#f5b878] before:absolute before:-top-2 before:left-16 before:h-4 before:w-px before:bg-[#888] after:absolute after:left-[69px] after:h-px after:w-3 after:bg-[#888]"><svg class="mr-[11px] size-2 text-[#ccc]"><use href="#tri-right"/></svg>
                            <span class="mr-[5px] flex size-6 items-center justify-center rounded bg-[#7482a3]"><svg class="size-[18px] text-[#f0a060]"><use href="#meshobj"/></svg></span>Cube
                            <svg class="ml-[30px] size-[18px] text-[#8ba0cc]"><use href="#animlink"/></svg><svg class="ml-2 size-[18px] text-[#12a8b4]"><use href="#mesh"/></svg>
                            <svg class="mr-1.5 ml-auto size-[17px] text-[#e0e0e0]"><use href="#eye"/></svg><svg class="size-[18px] text-[#e0e0e0]"><use href="#screen"/></svg></li>
                        <li class="bg-[#232323] pl-[34px]"><svg class="mr-4 size-2"><use href="#tri-down"/></svg>
                            <span class="mr-2 grid size-3.5 *:col-start-1 *:row-start-1"><input type="checkbox" checked aria-label="Camera" class="size-3.5 appearance-none rounded-xs bg-[#e0e0e0]"><svg class="pointer-events-none size-3.5 text-[#111]"><use href="#check"/></svg></span>
                            <span class="mr-[5px] flex size-6 items-center justify-center"><svg class="size-[18px]"><use href="#coll"/></svg></span>Camera
                            <svg class="mr-1.5 ml-auto size-[17px] text-[#e0e0e0]"><use href="#eye"/></svg><svg class="size-[18px] text-[#e0e0e0]"><use href="#screen"/></svg></li>
                        <li class="pl-[61px] before:absolute before:-top-2 before:left-16 before:h-4 before:w-px before:bg-[#777] after:absolute after:left-[69px] after:h-px after:w-3 after:bg-[#777]"><svg class="mr-[11px] size-2"><use href="#tri-right"/></svg>
                            <span class="mr-[5px] flex size-6 items-center justify-center"><svg class="size-5 text-[#e28b48]"><use href="#cam"/></svg></span>Camera
                            <span class="ml-[26px] flex size-6 items-center justify-center rounded-md bg-[#4c5655]"><svg class="size-[19px] text-[#16b294]"><use href="#camdata"/></svg></span>
                            <svg class="mr-1.5 ml-auto size-[17px] text-[#e0e0e0]"><use href="#eye"/></svg><svg class="size-[18px] text-[#e0e0e0]"><use href="#screen"/></svg></li>
                        <li class="bg-[#232323]"></li><li></li><li class="bg-[#232323]"></li><li></li><li class="bg-[#232323]"></li><li></li><li class="bg-[#232323]"></li>
                    </ul>
                </section>

                <!-- Properties -->
                <section class="mt-[3px] mb-0.5 flex min-h-0 flex-1 flex-col overflow-hidden rounded-md bg-[#2f2f2f]">
                    <div class="flex h-[33px] shrink-0 items-center bg-[#333] pr-3 pl-2.5">
                        <button class="mr-[18px] flex h-6 w-[39px] items-center justify-center gap-0.5 rounded bg-[#1e1e1e]" aria-label="Editor type"><svg class="size-5"><use href="#props"/></svg><svg class="size-3"><use href="#chev"/></svg></button>
                        <svg class="mr-2.5 size-[19px] text-white"><use href="#objmode"/></svg>Cube
                        <button class="ml-auto text-[#999]" aria-label="Pin"><svg class="size-[19px]"><use href="#pin"/></svg></button>
                    </div>
                    <div class="flex min-h-0 flex-1">
                        <nav class="flex w-9 shrink-0 flex-col items-end gap-px bg-[#141414] pt-[10px] text-[#cfcfcf] *:flex *:h-[35px] *:w-[34px] *:shrink-0 *:items-center *:justify-center *:rounded-l *:border *:border-r-0 *:border-[#262626] *:bg-[#1c1c1c]">
                            <button class="mb-[9px]" aria-label="Tool"><svg class="size-[19px]"><use href="#tools"/></svg></button>
                            <button aria-label="Render"><svg class="size-[19px]"><use href="#render"/></svg></button>
                            <button aria-label="Output"><svg class="size-[19px]"><use href="#output"/></svg></button>
                            <button aria-label="View layer"><svg class="size-[19px]"><use href="#layers"/></svg></button>
                            <button aria-label="Scene"><svg class="size-[19px]"><use href="#scene"/></svg></button>
                            <button class="mb-[9px] text-[#cc5c5c]" aria-label="World"><svg class="size-[19px]"><use href="#world"/></svg></button>
                            <button class="bg-[#3a3a3a]! text-[#f9a04c]" aria-label="Object"><svg class="size-[19px]"><use href="#object"/></svg></button>
                            <button class="text-[#6c9fe8]" aria-label="Modifiers"><svg class="size-[19px]"><use href="#wrench"/></svg></button>
                            <button class="text-[#5a8cd0]" aria-label="Particles"><svg class="size-[19px]"><use href="#particles"/></svg></button>
                            <button class="text-[#6c9fe8]" aria-label="Physics"><svg class="size-[19px]"><use href="#physics"/></svg></button>
                            <button class="text-[#6c9fe8]" aria-label="Constraints"><svg class="size-[19px]"><use href="#constraint"/></svg></button>
                            <button class="text-[#14a883]" aria-label="Mesh data"><svg class="size-[19px]"><use href="#mesh"/></svg></button>
                            <button class="mb-[9px] text-[#d87070]" aria-label="Material"><svg class="size-[19px]"><use href="#material"/></svg></button>
                            <button class="text-[#d87070]" aria-label="Texture"><svg class="size-[19px]"><use href="#texture"/></svg></button>
                        </nav>
                        <div class="flex min-w-0 flex-1 flex-col pt-1.5">
                            <label class="flex h-7 items-center justify-end pr-[18px]">Texture Space<input type="checkbox" class="mr-[15px] ml-[13px] size-4 appearance-none rounded-xs bg-[#5c5c5c]"><i class="size-1.5 rounded-full bg-[#ddd]"></i></label>
                            <label class="flex h-7 items-center justify-end pr-[39px] text-white">Shadow<span class="ml-[13px] grid size-4 *:col-start-1 *:row-start-1"><input type="checkbox" checked class="size-4 appearance-none rounded-xs bg-[#4a76c8]"><svg class="pointer-events-none size-4"><use href="#check"/></svg></span></label>
                            <label class="flex h-7 items-center justify-end pr-[18px]">In Front<input type="checkbox" class="mr-[15px] ml-[13px] size-4 appearance-none rounded-xs bg-[#5c5c5c]"><i class="size-1.5 rounded-full bg-[#ddd]"></i></label>
                            <label class="mt-[5px] flex h-6 items-center justify-end pr-[18px]">Display As
                                <span class="relative mr-[11px] ml-3 flex items-center"><select class="h-6 w-[112px] appearance-none rounded border border-[#383838] bg-[#1e1e1e] pl-2"><option>Textured</option></select><svg class="pointer-events-none absolute right-0.5 size-3"><use href="#chev"/></svg></span>
                                <i class="size-1.5 rounded-full bg-[#ddd]"></i></label>
                            <div class="mt-1 flex h-6 items-center justify-end pr-[18px]">Color<button class="mr-[11px] ml-3 h-6 w-[112px] rounded bg-white" aria-label="Object color"></button><i class="size-1.5 rounded-full bg-[#ddd]"></i></div>
                            <label class="mt-3 flex h-[30px] items-center pl-[29px] text-[#c8c8c8]"><svg class="mr-3 size-2 text-[#aaa]"><use href="#tri-right"/></svg><input type="checkbox" class="mr-2 size-4 appearance-none rounded-xs bg-[#5c5c5c]">Bounds</label>
                            <h2 class="flex h-[31px] items-center bg-[#383838] pr-2 pl-3 text-sm"><svg class="mr-2 size-2 text-[#bbb]"><use href="#tri-down"/></svg>Motion Paths<svg class="ml-auto h-2 w-4 text-[#bbb]"><use href="#grip"/></svg></h2>
                            <div class="mt-3 flex h-6 items-center justify-end pr-[9px]"><label for="pathsType">Paths Type</label>
                                <span class="relative ml-3 flex items-center"><select id="pathsType" class="h-6 w-[99px] appearance-none rounded-l border border-[#383838] bg-[#1e1e1e] pl-2"><option>In Range</option></select><svg class="pointer-events-none absolute right-0.5 size-3"><use href="#chev"/></svg></span>
                                <button class="ml-px flex h-6 w-[25px] items-center justify-center rounded-r bg-[#606060] text-white" aria-label="Use scene range"><svg class="size-[19px]"><use href="#clock"/></svg></button></div>
                            <div class="mt-[7px] flex h-[76px] justify-end pr-[9px]">
                                <div class="mr-3 grid grid-rows-3 items-center text-right"><label for="frStart">Frame Range St..</label><label for="frEnd">End</label><label for="frStep">Step</label></div>
                                <div class="grid w-[125px] grid-rows-3 gap-px overflow-hidden rounded text-sm *:min-w-0 *:bg-[#545456] *:text-center"><input id="frStart" value="1"><input id="frEnd" value="250"><input id="frStep" value="1"></div>
                            </div>
                            <p class="mt-[7px] flex h-7 items-center pl-3.5"><svg class="mr-2.5 size-[18px] text-white"><use href="#warn"/></svg>Nothing to show yet...</p>
                            <button class="mr-[9px] ml-[11px] flex h-6 shrink-0 items-center rounded bg-[#545456] pl-1"><svg class="size-[19px] text-white"><use href="#objmode"/></svg><span class="flex-1">Calculate...</span></button>
                            <h3 class="mt-3 flex h-[30px] items-center pl-[29px]"><svg class="mr-[9px] size-2 text-[#aaa]"><use href="#tri-down"/></svg>Display</h3>
                            <div class="bg-[#262628] py-[9px] *:flex *:h-7 *:items-center *:justify-end *:pr-[13px]">
                                <label>Frame Numbers<input type="checkbox" class="ml-[13px] size-4 appearance-none rounded-xs bg-[#5c5c5c]"></label>
                                <label class="text-white">Keyframes<span class="ml-[13px] grid size-4 *:col-start-1 *:row-start-1"><input type="checkbox" checked class="size-4 appearance-none rounded-xs bg-[#4a76c8]"><svg class="pointer-events-none size-4"><use href="#check"/></svg></span></label>
                                <label>Keyframe Numbers<input type="checkbox" class="ml-[13px] size-4 appearance-none rounded-xs bg-[#5c5c5c]"></label>
                            </div>
                            <h2 class="flex h-[30px] shrink-0 items-center bg-[#383838] pr-2 pl-3 text-sm"><svg class="mr-2 size-2 text-[#bbb]"><use href="#tri-right"/></svg>Visibility<svg class="ml-auto h-2 w-4 text-[#bbb]"><use href="#grip"/></svg></h2>
                            <h2 class="flex h-[30px] shrink-0 items-center bg-[#383838] pr-2 pl-3 text-sm"><svg class="mr-2 size-2 text-[#bbb]"><use href="#tri-right"/></svg>Custom Properties<svg class="ml-auto h-2 w-4 text-[#bbb]"><use href="#grip"/></svg></h2>
                        </div>
                    </div>
                </section>
            </div>
        </main>

        <!-- Status bar -->
        <footer class="flex h-[26px] shrink-0 items-center bg-[#232325] pr-[41px] pl-3.5 text-[#b4b4b4]">
            <div class="flex w-[314px] items-center gap-[9px]"><svg class="h-[22px] w-5"><use href="#mouse-l"/></svg>Change Frame</div>
            <div class="flex w-[313px] items-center gap-[9px]"><svg class="h-[22px] w-5"><use href="#mouse-m"/></svg>Pan View</div>
            <div class="flex w-[169px] items-center gap-2"><svg class="h-[22px] w-5"><use href="#mouse-r"/></svg>Select Time Marker</div>
            <div class="flex items-center"><svg class="h-[22px] w-4" viewBox="0 0 16 22"><use href="#mouse-r" width="20" height="22"/></svg><svg class="mr-1.5 h-[22px] w-2" viewBox="0 0 8 22"><path d="M1.500 3v7M4.500 1q3 5 0 11" fill="none" stroke="currentColor"/></svg>Move Time Marker</div>
            <p class="ml-auto">Collection 1 | Cube | Verts:16 | Faces:14 | Tris:28 | Objects:1/2 | Mem: 35.2 MiB | v2.82.7</p>
        </footer>

        <!-- Rename popup -->
        <form class="absolute top-[877px] left-[664px] w-[401px] rounded-md bg-[#0d0d0d]/90 px-2 pt-[5px] pb-2 text-[#b4b4b4] shadow-[0_2px_5px_#000c]" onsubmit="return false">
            <h2 class="h-[30px] pl-[9px] leading-[30px]">Rename Marker</h2>
            <label class="mt-[3px] flex h-[26px] items-center pl-[9px]">Name<input class="ml-auto h-[26px] w-[190px] rounded border border-[#303030] bg-[#0c0c0c] pl-[9px] text-white" value="My_marker"></label>
            <button class="mt-1.5 block h-6 w-full rounded bg-[#78a3ee] text-white"><u class="underline-offset-4">O</u>K</button>
        </form>
        <svg class="pointer-events-none absolute top-[942px] left-[938px] h-[20px] w-[13px]" viewBox="0 0 13 20"><path d="M1 1v14.500l3.300-3.200 2.200 5.400 2.600-1-2.300-5.200h4.700z" fill="#000" stroke="#fff" stroke-width="1.200"/></svg>

        <!-- Overlay badges -->
        <div class="absolute top-[13px] left-[13px] flex h-[43px] w-[43px] items-center justify-center bg-[#0d7ab6]">
            <svg class="size-[38px]" viewBox="0 0 38 38"><path d="M20 6.500a13 13 0 1 1 1 26" fill="none" stroke="#fff" stroke-width="3.500"/><path d="M22 1v11l-10-6z" fill="#fff"/><path d="M20 33A13.500 13.500 0 0 1 8 11" fill="none" stroke="#fff" stroke-width="3.500" stroke-dasharray="2.500 2.500"/><text x="19" y="24" font-size="13" font-family="Liberation Sans" font-weight="bold" text-anchor="middle" fill="#fff">10</text></svg>
        </div>
        <div class="absolute top-[13px] left-[75px] flex h-[43px] w-[44px] items-center justify-center bg-[#0d7ab6]">
            <svg class="size-8" viewBox="0 0 32 32"><circle cx="16" cy="16" r="13.500" fill="none" stroke="#fff" stroke-width="3.500"/><path d="M17 9v9h-6" fill="none" stroke="#fff" stroke-width="2.500"/></svg>
        </div>
        <div class="absolute top-[13px] right-3 flex h-[43px] w-[44px] items-center justify-center bg-[#0d7ab6]">
            <svg class="h-[22px] w-7" viewBox="0 0 28 22"><rect x="4" y="1.500" width="20" height="13" rx="1.500" fill="none" stroke="#fff" stroke-width="2.200"/><path d="M0 17h28q0 2.500-3 2.500H3Q0 19.500 0 17z" fill="#fff"/></svg>
        </div>
    </div>

    <script>
        const rect = (x, y, w, h, fill) => `<rect x="${x}" y="${y}" width="${w}" height="${h}" fill="${fill}"/>`;
        const diamond = (x, y, r, fill, stroke) => `<path d="M${x} ${y - r}l${r} ${r}-${r} ${r}-${r}-${r}z" fill="${fill}" stroke="${stroke}" stroke-width="1.5"/>`;

        function drawDopeSheet() {
            const fx = f => 47.5 + (f - 225) * 14.33;
            let out = rect(0, 30, '100%', 178, '#393939');
            const bands = [[32, 21, '#402b1a'], [56, 20, '#28303f'], [77, 24, '#30373f'], [102, 21, '#2d332b']];
            bands.forEach(b => out += rect(0, b[0], '100%', b[1], b[2]));
            for (let f = 222.5; f <= 315; f += 2.5) {
                out += rect(Math.round(fx(f)), 30, 1, 178, f % 5 ? '#0002' : '#1a1a1a');
            }
            out += rect(0, 126, '100%', 21, '#272727') + rect(0, 149, '100%', 21, '#272727');
            for (let f = 225; f <= 310; f += 5) {
                out += `<text x="${fx(f) - 0.5}" y="22" text-anchor="middle" fill="#a8a8a8">${f}</text>`;
            }

            // Hold blocks between equal keys
            for (let i = 0; i < 6; i++) out += rect(fx(274), 36 + i * 23.5, fx(279) - fx(274), 13, '#15101080');
            out += rect(fx(249), 130, fx(279) - fx(249), 13, '#181617') + rect(fx(259), 130, fx(269) - fx(259), 13, '#f08200');

            // Current frame line and marker
            const cx = Math.round(fx(264)) - 0.5;
            out += `<path d="M${cx} 28v186" stroke="#5680c2"/><path d="M${cx} 28v186" stroke="#c8d8f0" stroke-dasharray="4 3"/>`;
            out += `<path d="M${cx} 225l5 10h-10z" fill="#999"/><text x="${cx + 13}" y="226" fill="#ccc">F_264</text>`;

            const keys = [[249, 6, '#fff'], [254, 6, '#b5e2f5'], [259, 6, '#4c4646'], [264, 5, '#58ac58'], [269, 5, '#98e07c'], [274, 6, '#fff'], [279, 6, '#fff']];
            for (let i = 0; i < 6; i++) {
                keys.forEach(k => out += diamond(fx(k[0]), 42.5 + i * 23.5, k[1], k[2], '#000'));
            }
            out += `<path d="M${cx} 28v186" stroke="#3c6a80" stroke-opacity=".6"/>`;
            out += `<rect x="${cx - 19}" y="3" width="38" height="24" rx="4" fill="#4a7fd0"/><text x="${cx}" y="21" text-anchor="middle" fill="#fff">264</text>`;
            document.getElementById('dopeTracks').innerHTML = out;
        }

        function drawTimeline() {
            const fx = f => 52.5 + (f + 50) * 6.194;
            let out = rect(0, 30, '100%', 12, '#383838') + rect(0, 30, fx(1), 12, '#292929');
            for (let f = -55; f <= 200; f += 5) {
                out += rect(Math.round(fx(f)), 30, 1, 12, f % 10 ? '#0003' : '#181818');
            }
            out += rect(fx(1), 0, 1, 78, '#141414');
            for (let f = -50; f <= 190; f += 10) {
                out += `<text x="${fx(f) - 1}" y="22" text-anchor="middle" fill="#a0a0a0">${f}</text>`;
            }
            out += rect(870, 36, 118, 6, '#272425');
            [1, 21, 41, 61, 82, 101, 115].forEach(f => {
                const x = fx(f);
                out += `<path d="M${x - 5} 42h10l-5 6z" fill="#444"/><path d="M${x - 6} 42l6-6.500 6 6.500z" fill="#fff" stroke="#000" stroke-width="1.200"/>`;
            });
            document.getElementById('timelineTracks').innerHTML = out;
        }

        drawDopeSheet();
        drawTimeline();
    </script>
</body>
</html>
